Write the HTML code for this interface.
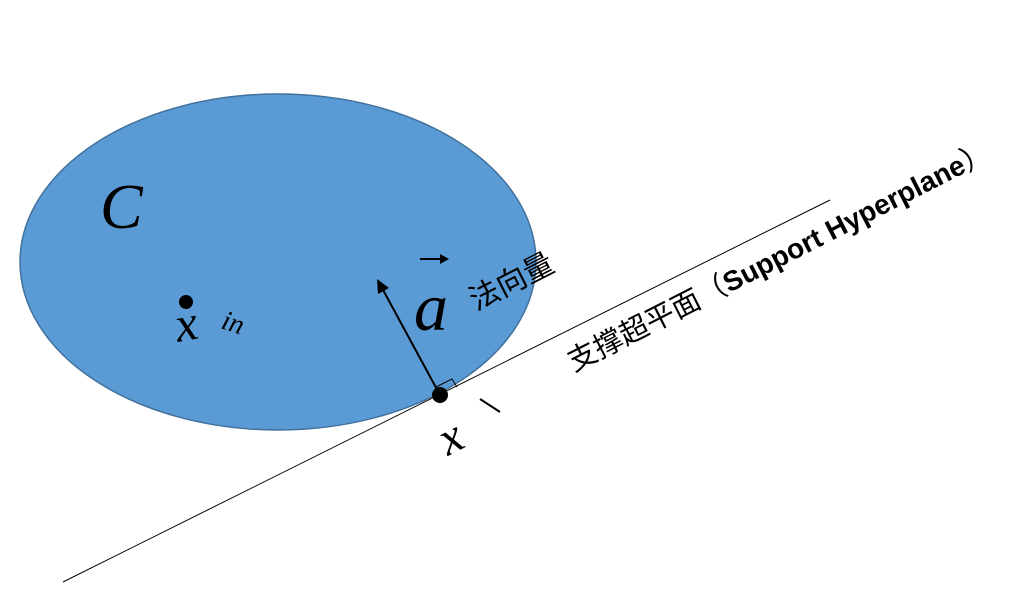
<!DOCTYPE html>
<html><head><meta charset="utf-8"><style>html,body{margin:0;padding:0;background:#fff;}svg{display:block}</style></head>
<body>
<svg width="1013" height="611" viewBox="0 0 1013 611" xmlns="http://www.w3.org/2000/svg">
<ellipse cx="278" cy="262" rx="258" ry="168" fill="#5b9bd5" stroke="#41719c" stroke-width="1.5"/>
<line x1="63" y1="582" x2="830" y2="200" stroke="#000" stroke-width="1"/>
<line x1="440" y1="395" x2="382" y2="288" stroke="#000" stroke-width="2"/>
<polygon points="377,279 378,294 389,288" fill="#000"/>
<polyline points="436,387 452,379 457,387" fill="none" stroke="#000" stroke-width="1"/>
<circle cx="440" cy="395" r="8" fill="#000"/>
<circle cx="186" cy="302" r="7" fill="#000"/>
<text x="100" y="228" font-family="Liberation Serif, serif" font-style="italic" font-size="64">C</text>
<text x="0" y="0" transform="translate(178,342) rotate(-10)" font-family="Liberation Serif, serif" font-style="italic" font-size="50">x</text>
<text x="0" y="0" transform="translate(220,328) rotate(18)" font-family="Liberation Serif, serif" font-style="italic" font-size="28">in</text>
<text x="414" y="330" font-family="Liberation Serif, serif" font-style="italic" font-size="68">a</text>
<line x1="420" y1="259" x2="444" y2="259" stroke="#000" stroke-width="2"/>
<polygon points="449,259 440,254 440,264" fill="#000"/>
<text x="0" y="0" transform="translate(476,311) rotate(-27)" font-family="Liberation Sans, 'Noto Sans CJK SC', sans-serif" font-size="30">法向量</text>
<line x1="480" y1="399" x2="500" y2="412" stroke="#000" stroke-width="2"/>
<text x="0" y="0" transform="translate(448,456) rotate(-27)" font-family="Liberation Serif, serif" font-style="italic" font-size="48">x</text>
<text x="0" y="0" transform="translate(574,372) rotate(-27)" font-family="Liberation Sans, 'Noto Sans CJK SC', sans-serif" font-size="29">支撑超平面（<tspan font-weight="bold" font-size="28">Support Hyperplane</tspan>）</text>
</svg>
</body></html>
